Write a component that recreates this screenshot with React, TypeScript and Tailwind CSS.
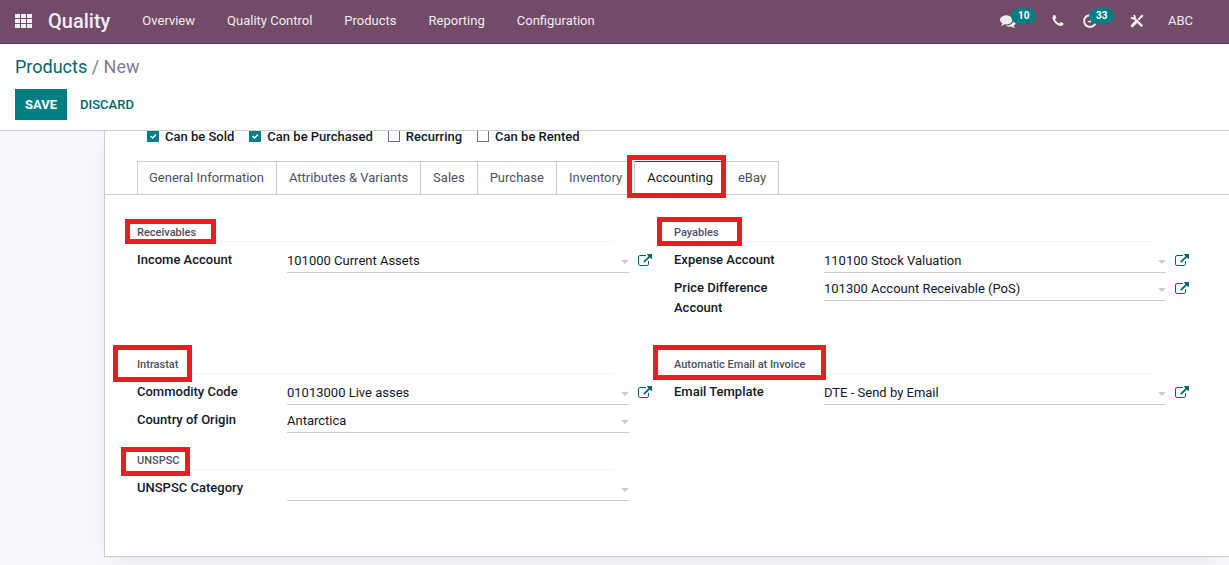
import React from 'react';

type Field = { id: string; label: string; value: string; link?: boolean };
type Group = { title: string; mark: string; className?: string; fields: Field[] };

const menus = ['Overview', 'Quality Control', 'Products', 'Reporting', 'Configuration'];

const options = [
  { id: 'sold', label: 'Can be Sold', checked: true },
  { id: 'purchased', label: 'Can be Purchased', checked: true },
  { id: 'recurring', label: 'Recurring', checked: false },
  { id: 'rented', label: 'Can be Rented', checked: false },
];

const tabs = ['General Information', 'Attributes & Variants', 'Sales', 'Purchase', 'Inventory', 'Accounting', 'eBay'];

const groups: Group[] = [
  {
    title: 'Receivables',
    mark: '-left-3 -right-5 -top-[5px] -bottom-[2px]',
    className: 'pb-4',
    fields: [{ id: 'income', label: 'Income Account', value: '101000 Current Assets', link: true }],
  },
  {
    title: 'Payables',
    mark: '-left-[17px] -right-[23px] -top-[7px] -bottom-1',
    className: 'pb-4',
    fields: [
      { id: 'expense', label: 'Expense Account', value: '110100 Stock Valuation', link: true },
      { id: 'difference', label: 'Price Difference Account', value: '101300 Account Receivable (PoS)', link: true },
    ],
  },
  {
    title: 'Intrastat',
    mark: '-left-6 -right-[14px] -top-[11px] -bottom-2',
    fields: [
      { id: 'commodity', label: 'Commodity Code', value: '01013000 Live asses', link: true },
      { id: 'country', label: 'Country of Origin', value: 'Antarctica' },
    ],
  },
  {
    title: 'Automatic Email at Invoice',
    mark: '-left-[21px] -right-[21px] -top-[11px] -bottom-[6px]',
    fields: [{ id: 'template', label: 'Email Template', value: 'DTE - Send by Email', link: true }],
  },
  {
    title: 'UNSPSC',
    mark: '-left-4 -right-[10px] -top-[5px] -bottom-[6px]',
    fields: [{ id: 'unspsc', label: 'UNSPSC Category', value: '' }],
  },
];

const Icon = ({ d, className }: { d: string; className: string }) => (
  <svg viewBox="0 0 1792 1792" fill="currentColor" className={className} aria-hidden="true">
    <path d={d} />
  </svg>
);

const COMMENTS =
  'M1408 768q0 139-94 257t-256.5 186.5-353.5 68.5q-86 0-176-16-124 88-278 128-36 9-86 16h-3q-11 0-20.5-8t-11.5-21q-1-3-1-6.5t.5-6.5 2-6l2.5-5 3.5-5.5 4-5 4.5-5 4-4.5q5-6 23-25t26-29.5 22.5-29 25-38.5 20.5-44q-124-72-195-177t-71-224q0-139 94-257t256.5-186.5 353.5-68.5 353.5 68.5 256.5 186.5 94 257zm384 256q0 120-71 224.5t-195 176.5q10 24 20.5 44t25 38.5 22.5 29 26 29.5 23 25q1 1 4 4.5t4.5 5 4 5 3.5 5.5l2.5 5 2 6 .5 6.5-1 6.5q-3 14-13 22t-22 7q-50-7-86-16-154-40-278-128-90 16-176 16-271 0-472-132 58 4 88 4 161 0 309-45t264-129q125-92 192-212t67-254q0-77-23-152 129 71 204 178t75 230z';
const PHONE =
  'M1600 1240q0 27-10 70.5t-21 68.5q-21 50-122 106-94 51-186 51-27 0-53-3.5t-57.5-12.5-47-14.5-55.5-20.5-49-18q-98-35-175-83-127-79-264-216t-216-264q-48-77-83-175-3-9-18-49t-20.5-55.5-14.5-47-12.5-57.5-3.5-53q0-92 51-186 56-101 106-122 25-11 68.5-21t70.5-10q14 0 21 3 18 6 53 76 11 19 30 54t35 63.5 31 53.5q3 4 17.5 25t21.5 35.5 7 28.5q0 20-28.5 50t-62 55-62 53-28.5 46q0 9 5 22.5t8.5 20.5 14 24 11.5 19q76 137 174 235t235 174q2 1 19 11.5t24 14 20.5 8.5 22.5 5q18 0 46-28.5t53-62 55-62 50-28.5q14 0 28.5 7t35.5 21.5 25 17.5q25 15 53.5 31t63.5 35 54 30q70 35 76 53 3 7 3 21z';
const CLOCK =
  'M1024 544v448q0 14-9 23t-23 9h-320q-14 0-23-9t-9-23v-64q0-14 9-23t23-9h224v-352q0-14 9-23t23-9h64q14 0 23 9t9 23zm416 352q0-148-73-273t-198-198-273-73-273 73-198 198-73 273 73 273 198 198 273 73 273-73 198-198 73-273zm224 0q0 209-103 385.5t-279.5 279.5-385.5 103-385.5-103-279.5-279.5-103-385.5 103-385.5 279.5-279.5 385.5-103 385.5 103 279.5 279.5 103 385.5z';
const EXTERNAL =
  'M1408 1056v320q0 119-84.5 203.5T1120 1664H288q-119 0-203.5-84.5T0 1376V544q0-119 84.5-203.5T288 256h704q14 0 23 9t9 23v64q0 14-9 23t-23 9H288q-66 0-113 47t-47 113v832q0 66 47 113t113 47h832q66 0 113-47t47-113v-320q0-14 9-23t23-9h64q14 0 23 9t9 23zm384-864v512q0 26-19 45t-45 19-45-19l-176-176-652 652q-10 10-23 10t-23-10l-114-114q-10-10-10-23t10-23l652-652-176-176q-19-19-19-45t19-45 45-19h512q26 0 45 19t19 45z';

const Badge = ({ className, children }: { className: string; children: React.ReactNode }) => (
  <span
    className={`absolute -top-[5px] h-4 rounded-full bg-[#017e84] px-[7px] text-[10px] leading-4 font-bold text-white ${className}`}
  >
    {children}
  </span>
);

const Navbar = () => (
  <header className="flex h-11 items-center border-b border-[#5a3c52] bg-[#714b67] px-[15px] pb-0.5 text-[13px] text-[#f0ecef]">
    <button type="button" aria-label="Apps" className="mr-4 grid grid-cols-3 gap-px">
      {Array.from({ length: 9 }, (_, i) => (
        <span key={i} className="h-1 w-[5px] bg-current" />
      ))}
    </button>
    <a href="#" className="mr-8 text-xl font-medium">Quality</a>
    <nav className="flex flex-1 gap-8">
      {menus.map((menu) => (
        <a key={menu} href="#">{menu}</a>
      ))}
    </nav>
    <div className="flex items-center pr-[21px]">
      <button type="button" aria-label="Messages" className="relative mr-[35px]">
        <Icon d={COMMENTS} className="size-4" />
        <Badge className="left-[11px]">10</Badge>
      </button>
      <button type="button" aria-label="Phone" className="mr-[17px]">
        <Icon d={PHONE} className="size-[14px]" />
      </button>
      <button type="button" aria-label="Activities" className="relative mr-8">
        <Icon d={CLOCK} className="size-4" />
        <Badge className="left-[7px]">33</Badge>
      </button>
      <button type="button" aria-label="Developer tools" className="mr-6">
        <svg viewBox="0 0 14 14" className="size-[14px]" fill="none" stroke="currentColor" aria-hidden="true">
          <path d="M4 4l7.6 7.6" strokeWidth="2.4" strokeLinecap="round" />
          <path d="M1 3.4q1.6 1.8 3.2.8T3.9 1" strokeWidth="1.8" />
          <path d="M12.8 1.2L8.2 5.8" strokeWidth="2" />
          <path d="M5.6 8.4l-3.4 3.4" strokeWidth="3" strokeLinecap="round" />
        </svg>
      </button>
      <button type="button">ABC</button>
    </div>
  </header>
);

const ControlPanel = () => (
  <div className="relative z-10 border-b border-[#c9ccd2] bg-white px-[15px] pt-2 pb-[10px]">
    <div className="text-lg leading-[30px] text-[#7c7f91]">
      <a href="#" className="text-[#01666b]">Products</a> / <span>New</span>
    </div>
    <div className="mt-[7px] flex text-[13px] font-medium">
      <button type="button" className="h-[31px] bg-[#017e84] px-[10px] font-bold text-white">SAVE</button>
      <button type="button" className="h-[31px] px-[13px] text-[#01666b]">DISCARD</button>
    </div>
  </div>
);

const FieldRow = ({ id, label, value, link }: Field) => (
  <div className="flex items-start py-1">
    <label htmlFor={id} className="w-[150px] shrink-0 pr-8 leading-5 font-medium text-[#111827]">
      {label}
    </label>
    <div className="relative -mb-[3px] flex-1">
      <input
        id={id}
        defaultValue={value}
        className="block h-[23px] w-full border-b border-[#c9ccd2] bg-transparent pr-4 pb-0.5 text-[#111827] outline-none"
      />
      <span className="absolute right-0 top-[10px] border-x-4 border-t-4 border-x-transparent border-t-[#c9ccd2]" />
    </div>
    <div className="ml-[9px] w-[14px] pt-[3px]">
      {link && (
        <button type="button" aria-label={`Open ${label}`} className="block text-[#01666b]">
          <Icon d={EXTERNAL} className="size-[14px]" />
        </button>
      )}
    </div>
  </div>
);

const FieldGroup = ({ title, mark, className = '', fields }: Group) => (
  <section className={className}>
    <div className="mr-[38px] mb-1 flex h-[22px] items-center border-b border-[#f3f4f6] pt-[5px]">
      <h2 className="relative text-[11px] leading-[18px] font-medium text-[#4b5163]">
        {title}
        <span className={`absolute border-5 border-[#ed1c24] ${mark}`} />
      </h2>
    </div>
    {fields.map((field) => (
      <FieldRow key={field.id} {...field} />
    ))}
  </section>
);

const App = () => (
  <div className="flex min-h-screen flex-col bg-[#f6f7fa] font-['Roboto',sans-serif] text-[13px]">
    <Navbar />
    <ControlPanel />
    <main className="flex-1 pl-[104px]">
      <div className="border-b border-l border-[#c9ccd2] bg-white pb-[54px] shadow-[0_5px_20px_-12px_rgba(0,0,0,0.2)]">
        {/* Product options */}
        <div className="flex gap-[15px] pl-[42px]">
          {options.map(({ id, label, checked }) => (
            <label key={id} htmlFor={id} className="flex items-start gap-[6px] leading-3 font-medium text-[#111827]">
              <span className="relative -mt-px flex size-3">
                <input
                  id={id}
                  type="checkbox"
                  defaultChecked={checked}
                  className="peer size-3 appearance-none border border-[#6b7280] bg-white checked:border-[#017e84] checked:bg-[#017e84]"
                />
                <svg
                  viewBox="0 0 12 12"
                  className="pointer-events-none absolute inset-0 hidden peer-checked:block"
                  fill="none"
                  stroke="white"
                  strokeWidth="1.5"
                >
                  <path d="M3.5 6l2 2 3.5-3.5" />
                </svg>
              </span>
              {label}
            </label>
          ))}
        </div>

        {/* Notebook tabs */}
        <div role="tablist" className="mt-[18px] flex border-b border-[#c9ccd2] pl-8">
          {tabs.map((tab) => (
            <button
              key={tab}
              type="button"
              role="tab"
              aria-selected={tab === 'Accounting'}
              className="relative h-[33px] border-t border-r border-[#c9ccd2] px-3 text-[#4b5163] first:border-l first:pl-[11px] aria-selected:border-t-[#374151] aria-selected:text-[#111827]"
            >
              {tab}
              {tab === 'Accounting' && (
                <span className="absolute -left-2 -right-px -top-[7px] -bottom-1 z-10 border-5 border-[#ed1c24]" />
              )}
            </button>
          ))}
        </div>

        <div className="grid grid-cols-2 gap-x-[22px] gap-y-[14px] pt-[25px] pr-10 pl-8">
          {groups.map((group) => (
            <FieldGroup key={group.title} {...group} />
          ))}
        </div>
      </div>
    </main>
  </div>
);

export default App;
